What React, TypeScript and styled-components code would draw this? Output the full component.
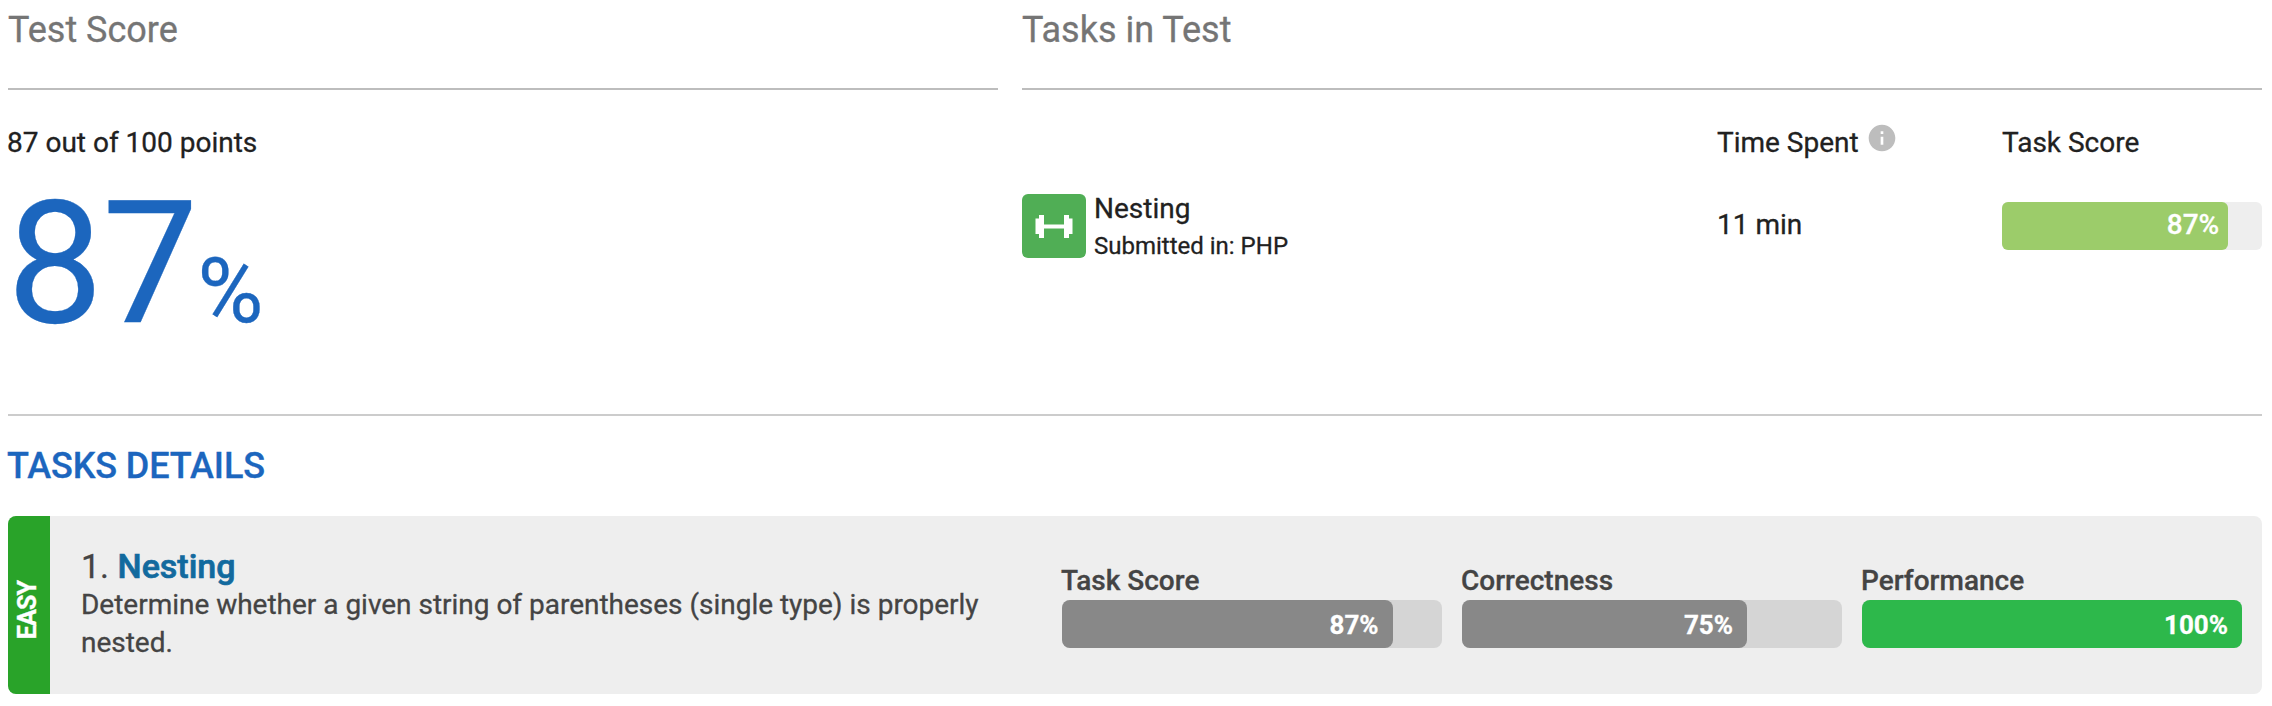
import React from 'react';
import styled, { createGlobalStyle } from 'styled-components';

const GlobalStyle = createGlobalStyle`
  *, *::before, *::after { box-sizing: border-box; }
  body {
    margin: 0;
    background: #fff;
    color: #212121;
    font-family: Roboto, "Liberation Sans", sans-serif;
    font-size: 28px;
    line-height: 38px;
    -webkit-text-stroke: 0.3px currentColor;
  }
`;

const Page = styled.main`
  display: flex;
  flex-direction: column;
  width: 2272px;
  height: 706px;
  padding: 0 10px 0 8px;
  overflow: hidden;
`;

const Summary = styled.div`
  display: grid;
  grid-template-columns: 990px 1240px;
  column-gap: 24px;
  height: 416px;
  border-bottom: 2px solid #cccccc;
`;

const SectionTitle = styled.h2`
  margin: 0;
  height: 90px;
  border-bottom: 2px solid #bdbdbd;
  color: #757575;
  font-size: 36px;
  font-weight: 400;
  line-height: 60px;
`;

const Points = styled.p`
  margin: 34px 0 0 -1px;
`;

const BigScore = styled.div`
  margin: 17px 0 0 -1px;
  color: #1c66be;
  font-size: 171px;
  line-height: 170px;
  letter-spacing: -0.8px;
  white-space: nowrap;
`;

const PercentSign = styled.span`
  font-size: 90px;
  line-height: 1;
`;

const TaskGrid = styled.div`
  display: grid;
  grid-template-columns: 695px 285px 260px;
  padding-top: 34px;
  row-gap: 32px;
`;

const ColumnLabel = styled.div`
  display: flex;
  height: 38px;
`;

const InfoIcon = styled.svg`
  width: 32px;
  height: 32px;
  margin: -2px 0 0 7px;
  fill: #bdbdbd;
`;

const TaskName = styled.div`
  display: flex;
  gap: 8px;
`;

const TaskTile = styled.div`
  width: 64px;
  height: 64px;
  border-radius: 6px;
  background: #50ae55;
`;

const Name = styled.div`
  line-height: 30px;
`;

const Submitted = styled.div`
  font-size: 24px;
  line-height: 44px;
`;

const TimeSpent = styled.div`
  margin-top: 12px;
`;

const Track = styled.div<{ $color: string; $top: number; $radius: number }>`
  height: 48px;
  margin-top: ${(p) => p.$top}px;
  border-radius: ${(p) => p.$radius}px;
  background: ${(p) => p.$color};
`;

const Fill = styled.div<{ $color: string; $strong?: boolean }>`
  height: 48px;
  padding-right: ${(p) => (p.$strong ? 14 : 9)}px;
  border-radius: inherit;
  background: ${(p) => p.$color};
  color: #fff;
  font-size: ${(p) => (p.$strong ? 26 : 28)}px;
  font-weight: ${(p) => (p.$strong ? 700 : 500)};
  line-height: ${(p) => (p.$strong ? 50 : 45)}px;
  text-align: right;
`;

const DetailsTitle = styled.h2`
  margin: 20px 0 20px -1px;
  color: #1c66be;
  font-size: 36px;
  font-weight: 500;
  line-height: 60px;
  letter-spacing: -0.1px;
`;

const Card = styled.section`
  display: grid;
  grid-template-columns: 42px 982px 1fr;
  height: 178px;
  padding-right: 20px;
  border-radius: 8px;
  background: #eeeeee;
  color: #444;
  overflow: hidden;
`;

const Difficulty = styled.div`
  display: flex;
  align-items: center;
  justify-content: center;
  padding: 9px 2px 0 0;
  background: #29a329;
  color: #fff;
  font-size: 25px;
  font-weight: 700;
  letter-spacing: -0.8px;
`;

const DifficultyText = styled.span`
  transform: rotate(-90deg);
`;

const Description = styled.div`
  padding: 31px 40px 0 31px;
`;

const TaskTitle = styled.h3`
  margin: 0;
  font-size: 34px;
  font-weight: 400;
  line-height: 38px;
`;

const TaskLink = styled.a`
  color: #126a9e;
  font-weight: 500;
  -webkit-text-stroke-width: 0.7px;
`;

const TaskText = styled.p`
  margin: 1px 0 0;
  letter-spacing: -0.015px;
`;

const Metrics = styled.div`
  display: grid;
  grid-template-columns: repeat(3, 380px);
  column-gap: 20px;
  padding: 46px 0 0 30px;
`;

const MetricLabel = styled.div`
  margin-left: -1px;
  font-weight: 500;
`;

const metrics = [
  { label: 'Task Score', value: 87, color: '#888888' },
  { label: 'Correctness', value: 75, color: '#888888' },
  { label: 'Performance', value: 100, color: '#2db84b' },
];

export default function App() {
  return (
    <>
      <GlobalStyle />
      <Page>
        <Summary>
          <section>
            <SectionTitle>Test Score</SectionTitle>
            <Points>87 out of 100 points</Points>
            <BigScore>87<PercentSign>%</PercentSign></BigScore>
          </section>
          <section>
            <SectionTitle>Tasks in Test</SectionTitle>
            <TaskGrid>
              <ColumnLabel />
              <ColumnLabel>
                Time Spent
                <InfoIcon viewBox="0 0 24 24">
                  <path d="M12 2C6.48 2 2 6.48 2 12s4.48 10 10 10 10-4.48 10-10S17.52 2 12 2zm1 15h-2v-6h2v6zm0-8h-2V7h2v2z" />
                </InfoIcon>
              </ColumnLabel>
              <ColumnLabel>Task Score</ColumnLabel>
              <TaskName>
                <TaskTile>
                  <svg width="64" height="64" viewBox="0 0 64 64" fill="#fff">
                    <path d="M17 21h5v9.500h20v-9.500h5v3.500h3.500v15.500h-3.500v4h-5v-9.500H22v9.500h-5v-4h-3.500v-15.500h3.500z" />
                  </svg>
                </TaskTile>
                <div>
                  <Name>Nesting</Name>
                  <Submitted>Submitted in: PHP</Submitted>
                </div>
              </TaskName>
              <TimeSpent>11 min</TimeSpent>
              <Track $color="#eeeeee" $top={8} $radius={6}>
                <Fill $color="#9ccc6a" style={{ width: '87%' }}>87%</Fill>
              </Track>
            </TaskGrid>
          </section>
        </Summary>
        <DetailsTitle>TASKS DETAILS</DetailsTitle>
        <Card>
          <Difficulty><DifficultyText>EASY</DifficultyText></Difficulty>
          <Description>
            <TaskTitle>1. <TaskLink>Nesting</TaskLink></TaskTitle>
            <TaskText>
              Determine whether a given string of parentheses (single type) is properly nested.
            </TaskText>
          </Description>
          <Metrics>
            {metrics.map((m) => (
              <div key={m.label}>
                <MetricLabel>{m.label}</MetricLabel>
                <Track $color="#d5d5d5" $top={0} $radius={8}>
                  <Fill $color={m.color} $strong style={{ width: `${m.value}%` }}>{m.value}%</Fill>
                </Track>
              </div>
            ))}
          </Metrics>
        </Card>
      </Page>
    </>
  );
}
